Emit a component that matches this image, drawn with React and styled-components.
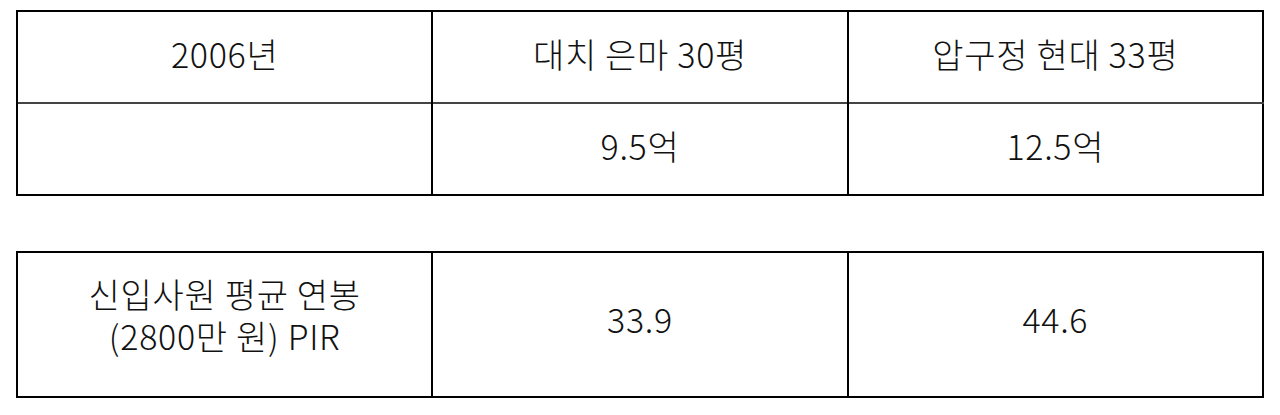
import React from "react";
import styled, { createGlobalStyle } from "styled-components";

const Global = createGlobalStyle`
  html, body { margin: 0; padding: 0; background: #fff; }
  body { font-family: "Noto Sans CJK KR", "Noto Sans", sans-serif; color: #111; }
`;

const Page = styled.div`
  padding: 10px 16px 0 16px;
  display: flex;
  flex-direction: column;
  gap: 55px;
`;

const Table = styled.table`
  width: 1248px;
  border-collapse: collapse;
  table-layout: fixed;
  border: 2px solid #000;
`;

const Cell = styled.td`
  box-sizing: border-box;
  height: ${(p) => p.$h}px;
  padding: 0 0 ${(p) => p.$pb ?? 6}px 0;
  border-left: 2px solid #000;
  border-top: ${(p) => (p.$first ? "2px solid #000" : "2px solid #444")};
  text-align: center;
  vertical-align: middle;
  font-size: 34px;
  line-height: 42px;
  font-weight: 300;
  letter-spacing: 0.7px;
`;

const rows1 = [
  ["2006년", "대치 은마 30평", "압구정 현대 33평"],
  ["", "9.5억", "12.5억"],
];

export default function App() {
  return (
    <>
      <Global />
      <Page>
        <Table>
          <tbody>
            {rows1.map((r, i) => (
              <tr key={i}>
                {r.map((c, j) => (
                  <Cell key={j} $h={92} $first={i === 0}>
                    {c}
                  </Cell>
                ))}
              </tr>
            ))}
          </tbody>
        </Table>
        <Table>
          <tbody>
            <tr>
              <Cell $h={145} $first $pb={19}>
                신입사원 평균 연봉
                <br />
                (2800만 원) PIR
              </Cell>
              <Cell $h={145} $first $pb={12}>33.9</Cell>
              <Cell $h={145} $first $pb={12}>44.6</Cell>
            </tr>
          </tbody>
        </Table>
      </Page>
    </>
  );
}
